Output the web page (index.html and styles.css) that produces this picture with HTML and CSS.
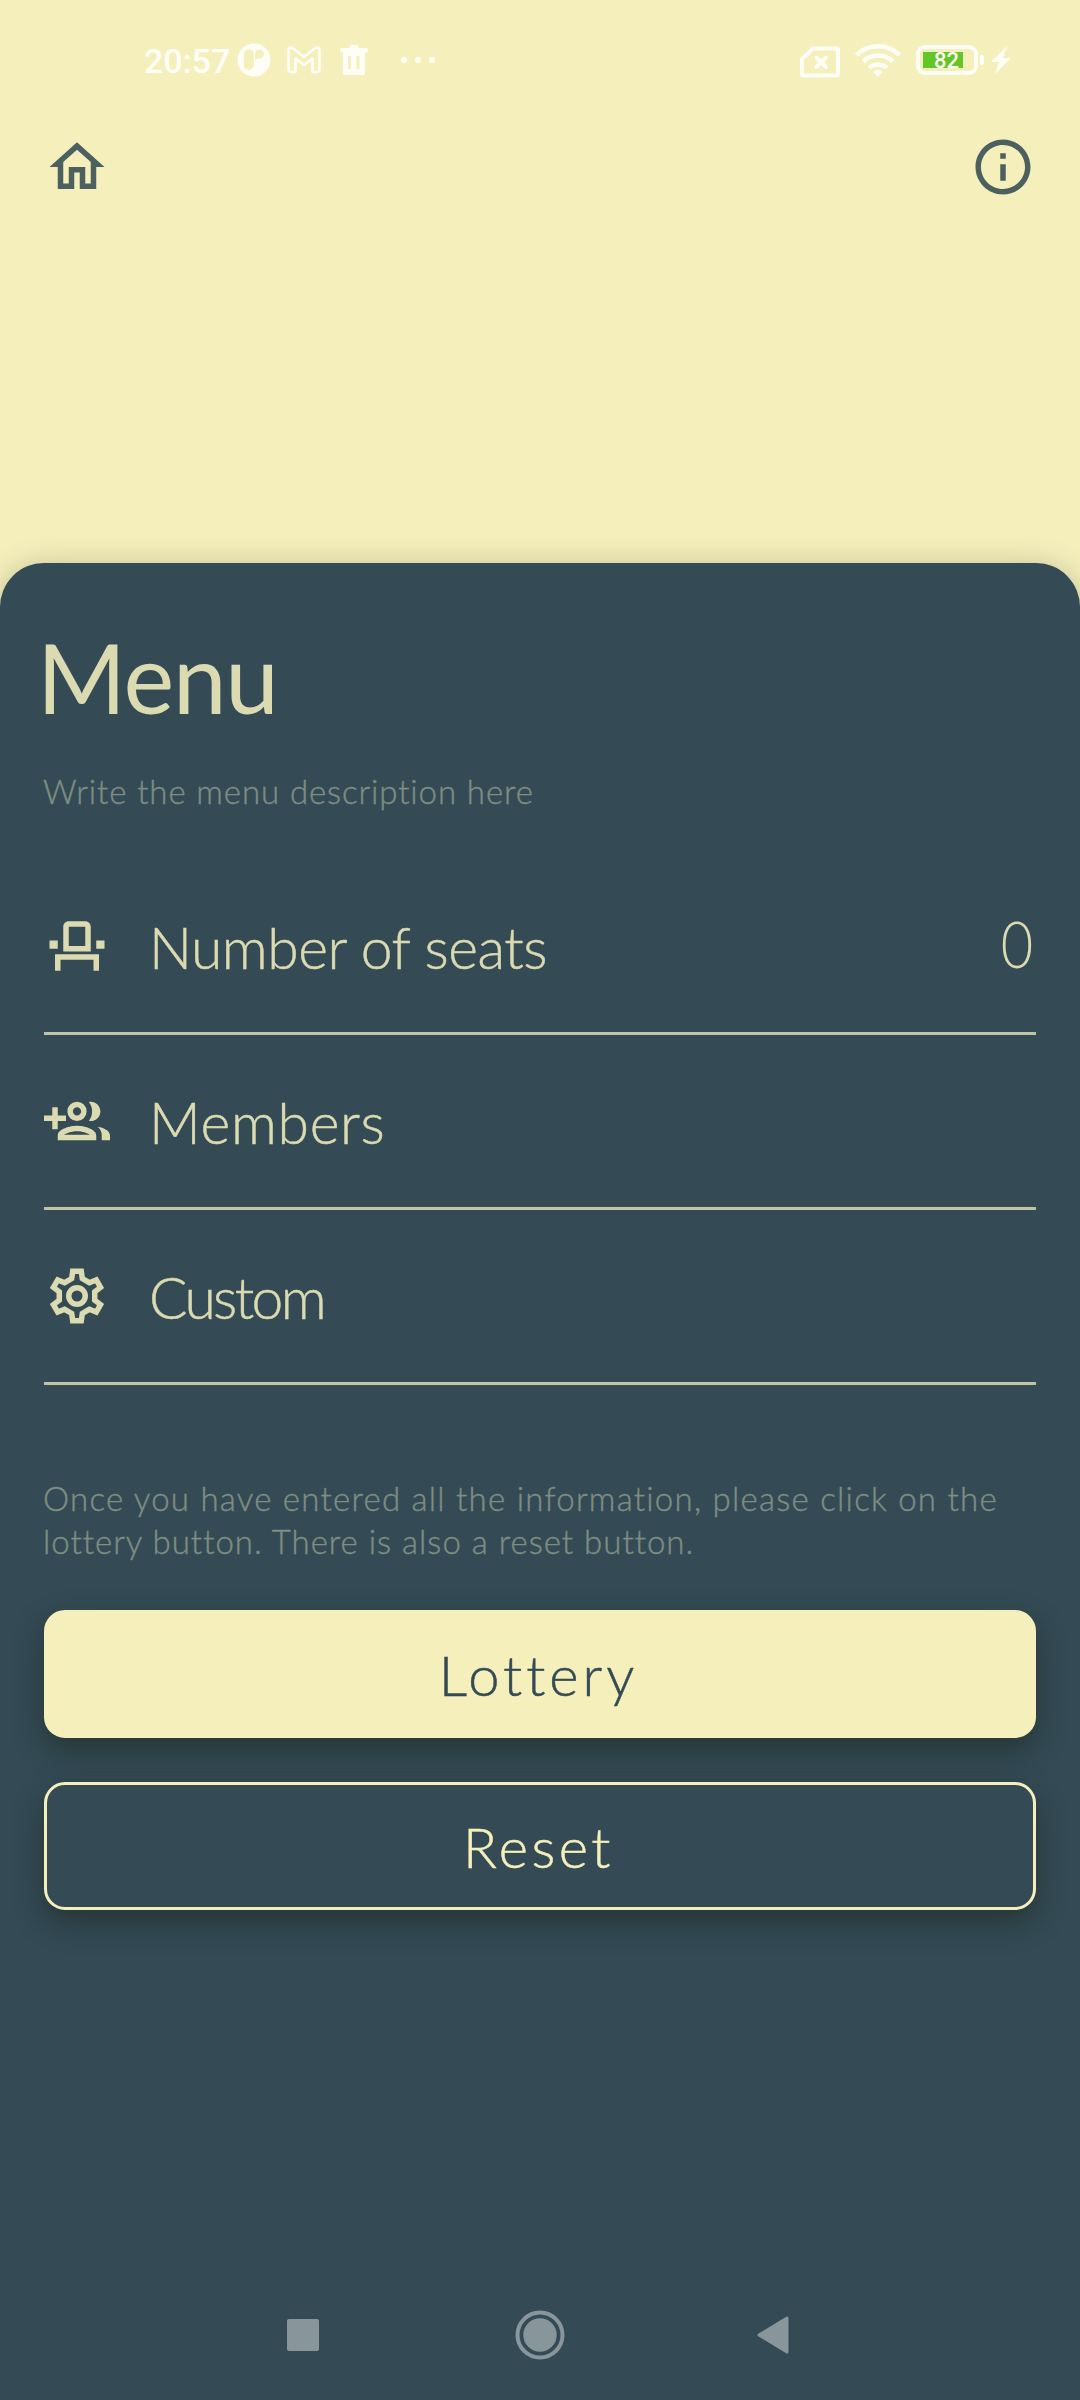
FILE: index.html
```html
<!DOCTYPE html>
<html lang="en">
<head>
<meta charset="utf-8">
<title>Menu</title>
<link rel="stylesheet" href="styles.css">
</head>
<body>
<div class="screen">
  <div class="statusbar">
    <div class="status-left">
      <span class="clock">20:57</span>
      <svg class="ic-app" width="34" height="34" viewBox="0 0 34 34"><path fill="currentColor" fill-rule="evenodd" d="M17 .5a16.500 16.500 0 1 0 0 33a16.500 16.500 0 1 0 0-33zM11.800 6.500c3 0 5 2 5 5v10.500a5 5 0 0 1-10 0V11.500c0-3 2-5 5-5zM22.500 6.500a4.500 4.500 0 1 1 0 9c-2 0-3.500 0-4.500 2v-6.500a4.500 4.500 0 0 1 4.500-4.500z"/></svg>
      <svg class="ic-mail" width="34" height="28" viewBox="0 0 34 28"><path fill="none" stroke="currentColor" stroke-width="2.600" stroke-linejoin="round" d="M1.500 4.500C1.500 1.500 4.500 1 6.500 2.500L17 11L27.500 2.500C29.500 1 32.500 1.500 32.500 4.500V23.500Q32.500 26 30 26H25.500V12.500L17 19L8.500 12.500V26H4Q1.500 26 1.500 23.500Z"/></svg>
      <svg class="ic-trash" width="28" height="30" viewBox="0 0 28 30"><path fill="currentColor" fill-rule="evenodd" d="M2 3h7.500V2q0-2 2-2h5q2 0 2 2v1H26q2 0 2 2t-2 2.500h-1V28q0 2-2 2H5q-2 0-2-2V7.500H2q-2 0-2-2.500t2-2zM8 12v11q0 1.500 1.500 1.500t1.500-1.500V12q0-1.500-1.500-1.500T8 12zM16.500 12v11q0 1.500 1.500 1.500t1.500-1.500V12q0-1.500-1.500-1.500t-1.500 1.500z"/></svg>
      <svg class="ic-dots" width="34" height="6" viewBox="0 0 34 6"><g fill="currentColor"><circle cx="3" cy="3" r="3"/><circle cx="17" cy="3" r="3"/><circle cx="31" cy="3" r="3"/></g></svg>
    </div>
    <div class="status-right">
      <svg class="ic-sim" width="40" height="32" viewBox="0 0 40 32"><g fill="none" stroke="currentColor" stroke-width="4" stroke-linejoin="round" stroke-linecap="round"><path d="M13 2.500H36Q38 2.500 38 4.500V27.500Q38 29.500 36 29.500H4Q2 29.500 2 27.500V13Z"/><path d="M16.500 11.500l9.500 9.500M26 11.500l-9.500 9.500"/></g></svg>
      <svg class="ic-wifi" width="46" height="34" viewBox="0 0 46 34"><g fill="none" stroke="currentColor" stroke-width="4.500"><path d="M1.500 12A31 31 0 0 1 44.500 12"/><path d="M8 18.500A22 22 0 0 1 38 18.500"/><path d="M14 25A13 13 0 0 1 32 25"/></g><path fill="currentColor" d="M18 29Q23 24.500 28 29L23.800 33.300Q23 34 22.200 33.300Z"/></svg>
      <div class="battery"><div class="battery-fill"><span>82</span></div></div>
      <div class="battery-nub"></div>
      <svg class="ic-bolt" width="20" height="28" viewBox="0 0 20 28"><path fill="currentColor" d="M16 0L0 16H8L4 28L20 12H12Z"/></svg>
    </div>
  </div>
  <div class="toolbar">
    <svg class="icon" viewBox="0 0 24 24"><path fill="currentColor" d="M12 5.690l5 4.500V18h-2v-6H9v6H7v-7.810l5-4.500M12 3L2 12h3v8h6v-6h2v6h6v-8h3L12 3z"/></svg>
    <svg class="icon" viewBox="0 0 24 24"><path fill="currentColor" d="M11 7h2v2h-2zm0 4h2v6h-2zm1-9C6.480 2 2 6.480 2 12s4.480 10 10 10 10-4.480 10-10S17.520 2 12 2zm0 18c-4.410 0-8-3.590-8-8s3.590-8 8-8 8 3.590 8 8-3.590 8-8 8z"/></svg>
  </div>
  <main class="sheet">
    <h1 class="title">Menu</h1>
    <p class="description">Write the menu description here</p>
    <div class="rows">
      <div class="row">
        <svg class="icon" viewBox="0 0 24 24"><path fill="currentColor" d="M15 5v7H9V5h6m0-2H9c-1.100 0-2 .9-2 2v9h10V5c0-1.100-.9-2-2-2zm7 7h-3v3h3v-3zM5 10H2v3h3v-3zm15 5H4v6h2v-4h12v4h2v-6z"/></svg>
        <span class="label label-seats">Number of seats</span>
        <span class="count">0</span>
      </div>
      <div class="row">
        <svg class="icon" viewBox="0 0 24 24"><path fill="currentColor" fill-rule="evenodd" d="M8 10H5V7H3v3H0v2h3v3h2v-3h3zM12 5a3.500 3.500 0 1 0 0 7a3.500 3.500 0 1 0 0-7zm0 2a1.500 1.500 0 1 1 0 3a1.500 1.500 0 1 1 0-3zM17 12c1.930 0 3.500-1.570 3.500-3.500S18.930 5 17 5c-.24 0-.48.02-.71.07.76.94 1.210 2.140 1.210 3.430s-.45 2.470-1.200 3.430c.22.05.46.07.7.07zM12 13.750c-2.340 0-7 1.170-7 3.500V19h14v-1.750c0-2.330-4.660-3.500-7-3.500zM7.340 17c.84-.58 2.870-1.250 4.660-1.250s3.820.67 4.660 1.250zM19.500 14.130c.95.75 1.500 1.750 1.500 3.120V19h3v-1.750c0-1.700-2.300-2.750-4.500-3.120z"/></svg>
        <span class="label label-members">Members</span>
      </div>
      <div class="row">
        <svg class="icon" viewBox="-12 -12 24 24"><g fill="none" stroke="currentColor" stroke-width="2"><path d="M-1.940-6.320L-1.560-9H1.560L1.940-6.320L4.500-4.840L7.010-5.850L8.570-3.150L6.440-1.480V1.480L8.570 3.150L7.010 5.850L4.500 4.840L1.940 6.320L1.560 9H-1.560L-1.940 6.320L-4.500 4.840L-7.010 5.850L-8.570 3.150L-6.440 1.480V-1.480L-8.570-3.150L-7.010-5.850L-4.500-4.840Z"/><circle r="3"/></g></svg>
        <span class="label label-custom">Custom</span>
      </div>
    </div>
    <p class="hint"><span class="hint-first">Once you have entered all the information, please click on the</span><br><span class="hint-second">lottery button. There is also a reset button.</span></p>
    <div class="actions">
      <button class="btn btn-filled">Lottery</button>
      <button class="btn btn-outline">Reset</button>
    </div>
  </main>
  <div class="navbar">
    <svg class="nav-recent" width="32" height="32" viewBox="0 0 32 32"><rect width="32" height="32" rx="2" fill="currentColor"/></svg>
    <svg class="nav-home" width="50" height="50" viewBox="0 0 50 50"><circle cx="25" cy="25" r="22.500" fill="none" stroke="currentColor" stroke-width="4"/><circle cx="25" cy="25" r="16.700" fill="currentColor"/></svg>
    <svg class="nav-back" width="32" height="38" viewBox="0 0 32 38"><path fill="currentColor" stroke="currentColor" stroke-width="3" stroke-linejoin="round" d="M2 19L30 2V36Z"/></svg>
  </div>
</div>
</body>
</html>
```
FILE: styles.css
```css
* { box-sizing: border-box; }
body { margin: 0; background: #344b55; }
.screen {
  width: 1080px;
  height: 2400px;
  overflow: hidden;
  display: flex;
  flex-direction: column;
  background: #f5efbc;
  font-family: Lato, "Open Sans", sans-serif;
  font-weight: 300;
}
svg { display: block; flex: none; }

.statusbar {
  height: 120px;
  flex: none;
  display: flex;
  justify-content: space-between;
  align-items: center;
  padding: 0 69px 0 144px;
  color: #fffef6;
}
.status-left, .status-right { display: flex; align-items: center; }
.clock {
  width: 93px;
  font: 500 34px/40px Roboto, sans-serif;
  padding-top: 2px;
}
.ic-mail { margin-left: 16px; }
.ic-trash { margin-left: 19px; }
.ic-dots { margin-left: 33px; }
.ic-sim { margin-top: 3px; }
.ic-wifi { margin-left: 15px; }
.battery {
  width: 62px;
  height: 30px;
  margin-left: 15px;
  padding: 3px;
  border: 4px solid currentColor;
  border-radius: 9px;
}
.battery-fill {
  width: 40px;
  height: 16px;
  background: #62c625;
  display: flex;
  align-items: center;
  justify-content: flex-end;
  padding: 2px 4px 0 0;
  font: 500 22px/16px Roboto, sans-serif;
}
.battery-nub {
  width: 4px;
  height: 10px;
  margin-left: 2px;
  border-radius: 2px;
  background: currentColor;
}
.ic-bolt { margin-left: 7px; }

.toolbar {
  flex: none;
  height: 443px;
  display: flex;
  justify-content: space-between;
  padding: 14px 44px 0;
  color: #4c605f;
}
.icon { width: 66px; height: 66px; }

.sheet {
  flex: 1;
  min-height: 0;
  padding: 0 44px;
  border-radius: 44px 44px 0 0;
  background: #344b55;
  box-shadow: 0 4px 30px rgba(52, 60, 40, .3);
  color: #dbdab0;
}
.title {
  margin: 54px 0 0 -7px;
  font-size: 96px;
  line-height: 120px;
  font-weight: 400;
  letter-spacing: -1.2px;
}
.description, .hint {
  margin: 0 0 0 -1px;
  font-size: 33px;
  line-height: 43px;
  color: #7f8d82;
  white-space: nowrap;
  -webkit-text-stroke: .4px currentColor;
}
.description { margin-top: 33px; letter-spacing: .9px; }
.rows { margin-top: 47px; }
.row {
  height: 175px;
  display: flex;
  align-items: center;
  border-bottom: 3px solid #c0c3a4;
}
.label {
  margin-left: 39px;
  padding-top: 1px;
  font-size: 57px;
  line-height: 70px;
  -webkit-text-stroke: .5px currentColor;
}
.label-seats { letter-spacing: -.5px; }
.label-members { letter-spacing: .7px; }
.label-custom { letter-spacing: -2.6px; }
.count {
  margin-left: auto;
  padding-bottom: 6px;
  font-size: 65px;
  line-height: 70px;
  transform: scaleX(.86);
}
.hint { margin-top: 92px; }
.hint-first { letter-spacing: 1.25px; }
.hint-second { letter-spacing: 1px; }
.actions {
  display: flex;
  flex-direction: column;
  gap: 44px;
  margin-top: 47px;
}
.btn {
  height: 128px;
  padding: 2px 3px 0 0;
  border: 3px solid #f5efbc;
  border-radius: 21px;
  box-shadow: 0 12px 30px rgba(20, 26, 16, .45);
  font: 300 56px/70px Lato, "Open Sans", sans-serif;
  letter-spacing: 4px;
  -webkit-text-stroke: .5px currentColor;
}
.btn-filled { background: #f5efbc; color: #344b55; }
.btn-outline { background: #344b55; color: #f5efbc; letter-spacing: 3.5px; }

.navbar {
  flex: none;
  height: 128px;
  display: flex;
  align-items: center;
  padding: 0 0 2px 287px;
  background: #344b55;
  color: #88969c;
}
.nav-home { margin-left: 196px; }
.nav-back { margin-left: 192px; }
```
